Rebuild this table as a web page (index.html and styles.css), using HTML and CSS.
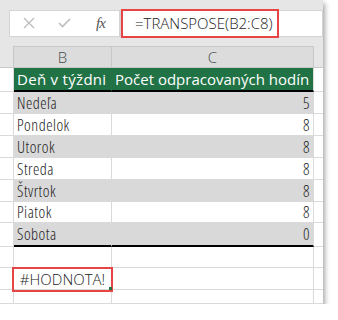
FILE: index.html
```html
<!DOCTYPE html>
<html lang="sk">
<head>
    <meta charset="UTF-8">
    <title>TRANSPOSE – #HODNOTA!</title>
    <link rel="stylesheet" href="styles.css">
</head>
<body>
    <div class="window">
        <!-- Riadok vzorcov -->
        <div class="formula-bar">
            <div class="fb-buttons">
                <svg class="icon" width="12" height="12" viewBox="0 0 12 12">
                    <path d="M1 1 L11 11 M11 1 L1 11" stroke="#bdbdbd" stroke-width="1.4" fill="none"/>
                </svg>
                <svg class="icon" width="13" height="10" viewBox="0 0 13 10">
                    <path d="M1 5 L4.5 8.5 L12 1" stroke="#bdbdbd" stroke-width="1.6" fill="none"/>
                </svg>
                <span class="fx">fx</span>
            </div>
            <div class="fb-field">
                <span class="formula">=TRANSPOSE(B2:C8)</span>
            </div>
        </div>

        <!-- Hárok -->
        <div class="sheet">
            <div class="row row-head">
                <div class="cell"></div>
                <div class="cell colhead">B</div>
                <div class="cell colhead">C</div>
                <div class="cell"></div>
            </div>
            <div class="row row-title">
                <div class="cell"></div>
                <div class="cell title">Deň v týždni</div>
                <div class="cell title">Počet odpracovaných hodín</div>
                <div class="cell"></div>
            </div>
            <div class="row shaded">
                <div class="cell"></div>
                <div class="cell">Nedeľa</div>
                <div class="cell num">5</div>
                <div class="cell"></div>
            </div>
            <div class="row">
                <div class="cell"></div>
                <div class="cell">Pondelok</div>
                <div class="cell num">8</div>
                <div class="cell"></div>
            </div>
            <div class="row shaded">
                <div class="cell"></div>
                <div class="cell">Utorok</div>
                <div class="cell num">8</div>
                <div class="cell"></div>
            </div>
            <div class="row">
                <div class="cell"></div>
                <div class="cell">Streda</div>
                <div class="cell num">8</div>
                <div class="cell"></div>
            </div>
            <div class="row shaded">
                <div class="cell"></div>
                <div class="cell">Štvrtok</div>
                <div class="cell num">8</div>
                <div class="cell"></div>
            </div>
            <div class="row row-short">
                <div class="cell"></div>
                <div class="cell">Piatok</div>
                <div class="cell num">8</div>
                <div class="cell"></div>
            </div>
            <div class="row shaded row-last">
                <div class="cell"></div>
                <div class="cell">Sobota</div>
                <div class="cell num">0</div>
                <div class="cell"></div>
            </div>
            <div class="row row-short">
                <div class="cell"></div>
                <div class="cell"></div>
                <div class="cell"></div>
                <div class="cell"></div>
            </div>
            <div class="row">
                <div class="cell"></div>
                <div class="cell error">#HODNOTA!<span class="handle"></span></div>
                <div class="cell"></div>
                <div class="cell"></div>
            </div>
            <div class="row row-cut">
                <div class="cell"></div>
                <div class="cell"></div>
                <div class="cell"></div>
                <div class="cell"></div>
            </div>
        </div>
    </div>
</body>
</html>
```

FILE: styles.css
```css
/* Grundlayout */
* {
    box-sizing: border-box;
    margin: 0;
    padding: 0;
}

body {
    background: #fff;
    font-family: 'Open Sans', 'Noto Sans', sans-serif;
    font-size: 15px;
    color: #222;
}

.window {
    width: 323px;
    height: 304px;
    background: #e6e6e6;
    box-shadow: 2px 3px 5px rgba(0, 0, 0, 0.35);
    overflow: hidden;
}

/* Riadok vzorcov */
.formula-bar {
    display: flex;
    align-items: center;
    height: 46px;
    padding-left: 9px;
}

.fb-buttons {
    display: flex;
    align-items: center;
    width: 111px;
    height: 27px;
    background: #fff;
    border: 1px solid #d4d4d4;
}

.icon {
    display: block;
}

.fb-buttons .icon:first-child {
    margin-left: 13px;
}

.fb-buttons .icon:nth-child(2) {
    margin-left: 23px;
}

.fx {
    margin-left: 25px;
    font-family: 'Liberation Serif', serif;
    font-style: italic;
    font-size: 15px;
    color: #555;
    letter-spacing: -1px;
}

.fb-field {
    display: flex;
    align-items: center;
    width: 203px;
    height: 27px;
    background: #fff;
    border: 1px solid #d4d4d4;
}

.formula {
    display: flex;
    align-items: center;
    width: 158px;
    height: 29px;
    padding-left: 12px;
    border: 2px solid #e64545;
    color: #222;
    font-weight: 350;
    font-stretch: 90%;
    white-space: nowrap;
}

/* Hárok */
.row {
    display: grid;
    grid-template-columns: 14px 98px 202px 9px;
    height: 22px;
}

.cell {
    display: flex;
    align-items: center;
    padding: 0 3px;
    background: #fff;
    border-right: 1px solid #dadada;
    border-bottom: 1px solid #dadada;
    font-size: 16px;
    font-weight: 350;
    font-stretch: 80%;
    letter-spacing: 0.5px;
    white-space: nowrap;
    overflow: hidden;
}

.cell:last-child {
    border-right: 0;
}

.num {
    justify-content: flex-end;
}

.row-head .cell {
    background: #e6e6e6;
    border-color: #c8c8c8;
}

.row-head .colhead {
    justify-content: center;
    background: #dcdcdc;
    border-top: 1px solid #c8c8c8;
    color: #3d4e4a;
    font-size: 15px;
    font-stretch: 100%;
    letter-spacing: 0;
}

.row-title {
    height: 24px;
}

.title {
    background: #217346;
    color: #fff;
    font-size: 15px;
    font-weight: 400;
    font-stretch: 100%;
    letter-spacing: 0;
    border-right-color: #217346;
    border-bottom: 2px solid #000;
}

.title:nth-child(2) {
    letter-spacing: 0.3px;
}

.title:nth-child(3) {
    border-right-color: #dadada;
}

.shaded .cell:nth-child(2),
.shaded .cell:nth-child(3) {
    background: #d9d9d9;
    border-bottom-color: #d9d9d9;
}

.shaded .cell:nth-child(2) {
    border-right-color: #d9d9d9;
}

.row-short {
    height: 21px;
}

.row-last {
    height: 24px;
}

.row-last .cell:nth-child(2),
.row-last .cell:nth-child(3) {
    border-bottom: 2px solid #000;
}

.row-cut {
    height: 14px;
}

.error {
    position: relative;
    justify-content: center;
    overflow: visible;
    font-size: 15px;
    font-stretch: 92%;
    letter-spacing: 0;
}

/* rote Markierung über der Zelle */
.error::after {
    content: "";
    position: absolute;
    top: -1px;
    left: -2px;
    right: -2px;
    bottom: -3px;
    border: 2px solid #e64545;
}

.handle {
    position: absolute;
    right: -1px;
    bottom: -1px;
    width: 3px;
    height: 3px;
    background: #217346;
    z-index: 1;
}
```
